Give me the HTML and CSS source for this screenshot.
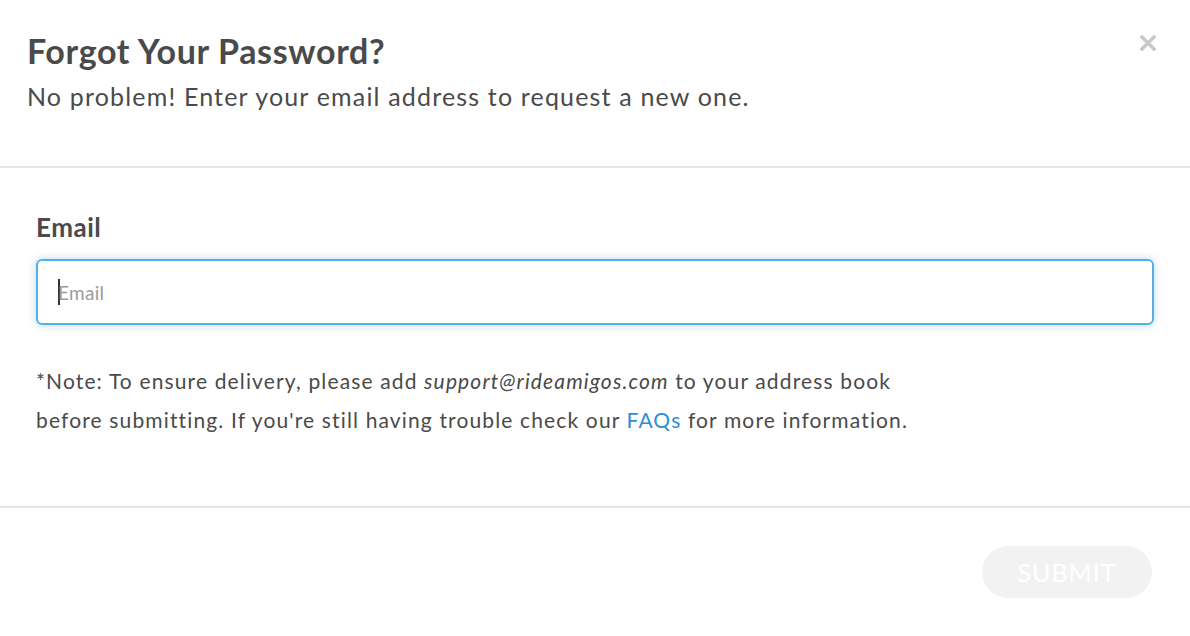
FILE: index.html
```html
<!DOCTYPE html>
<html>
<head>
<meta charset="utf-8">
<link rel="stylesheet" href="styles.css">
</head>
<body>
<div class="modal">
  <div class="modal-header">
    <h1 class="title">Forgot Your Password?</h1>
    <p class="subtitle">No problem! Enter your email address to request a new one.</p>
    <button class="close" aria-label="Close">
      <svg width="16" height="16" viewBox="0 0 16 16"><path d="M2 2 L14 14 M14 2 L2 14" stroke="#c8c8c8" stroke-width="3.4" stroke-linecap="square"/></svg>
    </button>
  </div>
  <div class="modal-body">
    <label class="label">Email</label>
    <div class="input"><span class="caret"></span><span class="placeholder">Email</span></div>
    <p class="note">*Note: To ensure delivery, please add <em>support@rideamigos.com</em> to your address book<br>before submitting. If you're still having trouble check our <a class="link" href="#">FAQs</a> for more information.</p>
  </div>
  <div class="modal-footer">
    <button class="submit">SUBMIT</button>
  </div>
</div>
</body>
</html>
```
FILE: styles.css
```css
* { box-sizing: border-box; }
html, body { margin: 0; padding: 0; background: #fff; }
body { font-family: Lato, "Open Sans", sans-serif; color: #4a4a4a; }
.modal { width: 1190px; height: 636px; display: flex; flex-direction: column; }
.modal-header { position: relative; height: 168px; padding: 30px 27px 0; border-bottom: 2px solid #e6e6e6; }
.title { margin: 0; font-size: 34px; font-weight: 700; line-height: 42px; letter-spacing: 0.65px; color: #4a4a4a; }
.subtitle { margin: 8px 0 0; font-size: 25px; line-height: 32px; letter-spacing: 1.17px; color: #4a4a4a; }
.close { position: absolute; top: 35px; right: 34px; border: 0; background: none; padding: 0; width: 16px; height: 16px; }
.close svg { display: block; }
.modal-body { height: 340px; padding: 43px 36px 0 36px; border-bottom: 2px solid #e6e6e6; }
.label { display: block; font-size: 26px; font-weight: 700; line-height: 32px; letter-spacing: 0.5px; color: #4a4a4a; }
.input { margin-top: 16px; height: 66px; border: 2px solid #5aaee6; border-radius: 6px; box-shadow: 0 0 8px rgba(90,174,230,0.45); display: flex; align-items: center; padding-left: 20px; }
.caret { width: 2px; height: 26px; background: #333; }
.placeholder { font-size: 19px; color: #9b9b9b; margin-left: -2px; letter-spacing: 0.3px; }
.note { margin: 36px 0 0; font-size: 21px; line-height: 39px; letter-spacing: 1.14px; color: #4a4a4a; }
.note em { font-style: italic; }
.link { color: #2d8fd0; text-decoration: none; }
.modal-footer { flex: 1; display: flex; justify-content: flex-end; align-items: flex-start; padding: 38px 38px 0 0; }
.submit { width: 170px; height: 52px; border: 0; border-radius: 26px; background: #f2f2f2; color: #fff; font-family: Lato, sans-serif; font-size: 25px; letter-spacing: 1px; padding: 0; }
```
